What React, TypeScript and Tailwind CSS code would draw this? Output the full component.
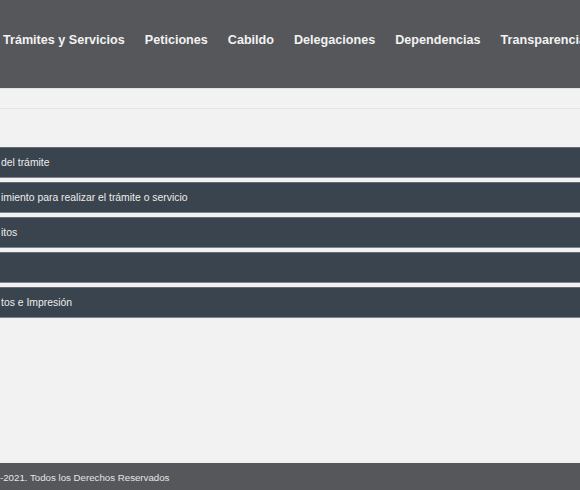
const navItems = ["Trámites y Servicios", "Peticiones", "Cabildo", "Delegaciones", "Dependencias", "Transparencia"];

const sections = [
  "del trámite",
  "imiento para realizar el trámite o servicio",
  "itos",
  "",
  "tos e Impresión",
];

export default function App() {
  return (
    <div className="flex min-h-screen flex-col overflow-hidden bg-[#f2f2f2] font-['Liberation_Sans',Arial,sans-serif]">
      <header className="flex h-[88px] shrink-0 items-center bg-[#55575b] pb-[8px] pl-[3px]">
        <nav className="flex gap-[20px] whitespace-nowrap text-[12.6px] font-bold text-[#f2f2f2]">
          {navItems.map((item) => (
            <a key={item} href="#" className="leading-none">{item}</a>
          ))}
        </nav>
      </header>

      <div className="h-[21px] shrink-0 border-t border-b border-t-[#e2e2e2] border-b-[#e6e6e6]" />

      <main className="flex flex-1 flex-col gap-[4px] pt-[38px]">
        {sections.map((label, i) => (
          <button
            key={i}
            type="button"
            className="flex h-[31px] w-full items-center border-t border-b border-t-[#666c73] border-b-[#80868d] bg-[#3a444e] pl-[1px] text-left text-[10.4px] text-[#ececec]"
          >
            {label}
          </button>
        ))}
      </main>

      <footer className="flex h-[27px] shrink-0 items-center bg-[#55575b] pt-[3px] text-[9.7px] text-[#e6e6e6]">
        -2021. Todos los Derechos Reservados
      </footer>
    </div>
  );
}
